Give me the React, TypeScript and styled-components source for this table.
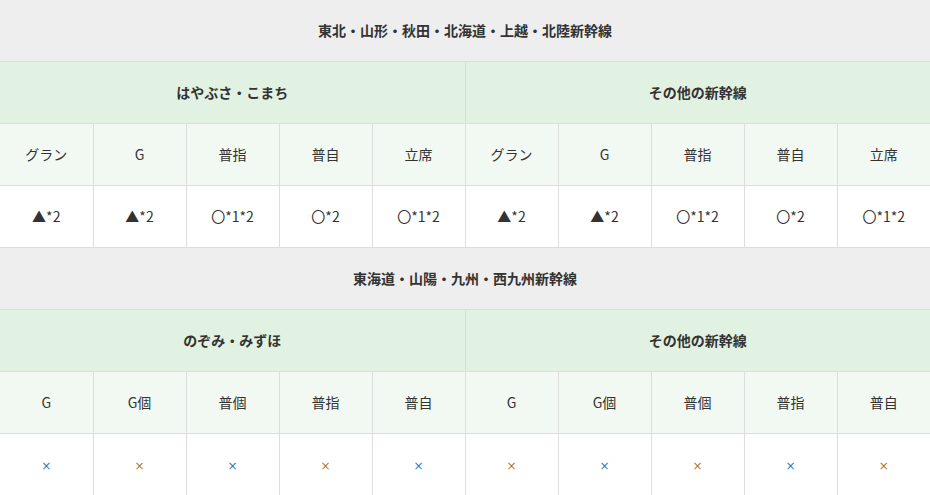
import React from 'react';
import styled, { createGlobalStyle } from 'styled-components';

const Global = createGlobalStyle`
    body {
        margin: 0;
        background: #ffffff;
        font-family: "Noto Sans CJK JP", "Noto Sans", sans-serif;
        color: #333333;
    }
`;

const Table = styled.table`
    width: 930px;
    border-collapse: collapse;
    border-style: hidden;
    table-layout: fixed;
    font-size: 14px;
`;

const Cell = styled.td`
    height: 61px;
    padding: 0;
    text-align: center;
    vertical-align: middle;
    border: 1px solid #dddddd;
    line-height: 1.2;
`;

const Region = styled(Cell)`
    background: #eeeeee;
    font-weight: bold;
`;

const Group = styled(Cell)`
    background: #e2f2e2;
    font-weight: bold;
`;

const ColHead = styled(Cell)`
    background: #f2f9f2;
`;

const Mark = styled.span<{ $tone: 'blue' | 'brown' }>`
    color: ${p => (p.$tone === 'blue' ? '#2c7cbd' : '#b0782e')};
    font-family: "DejaVu Sans", sans-serif;
    font-size: 12px;
`;

type Block = {
    region: string;
    groups: [string, string];
    cols: string[];
    values: React.ReactNode[];
};

const cross = (i: number) => <Mark $tone={i % 2 === 0 ? 'blue' : 'brown'}>×</Mark>;

const blocks: Block[] = [
    {
        region: '東北・山形・秋田・北海道・上越・北陸新幹線',
        groups: ['はやぶさ・こまち', 'その他の新幹線'],
        cols: ['グラン', 'G', '普指', '普自', '立席', 'グラン', 'G', '普指', '普自', '立席'],
        values: ['▲*2', '▲*2', '〇*1*2', '〇*2', '〇*1*2', '▲*2', '▲*2', '〇*1*2', '〇*2', '〇*1*2'],
    },
    {
        region: '東海道・山陽・九州・西九州新幹線',
        groups: ['のぞみ・みずほ', 'その他の新幹線'],
        cols: ['G', 'G個', '普個', '普指', '普自', 'G', 'G個', '普個', '普指', '普自'],
        values: Array.from({ length: 10 }, (_, i) => cross(i)),
    },
];

export default function App() {
    return (
        <>
            <Global />
            <Table>
                <tbody>
                    {blocks.map(b => (
                        <React.Fragment key={b.region}>
                            <tr>
                                <Region colSpan={10}>{b.region}</Region>
                            </tr>
                            <tr>
                                <Group colSpan={5}>{b.groups[0]}</Group>
                                <Group colSpan={5}>{b.groups[1]}</Group>
                            </tr>
                            <tr>
                                {b.cols.map((c, i) => (
                                    <ColHead key={i}>{c}</ColHead>
                                ))}
                            </tr>
                            <tr>
                                {b.values.map((v, i) => (
                                    <Cell key={i}>{v}</Cell>
                                ))}
                            </tr>
                        </React.Fragment>
                    ))}
                </tbody>
            </Table>
        </>
    );
}
